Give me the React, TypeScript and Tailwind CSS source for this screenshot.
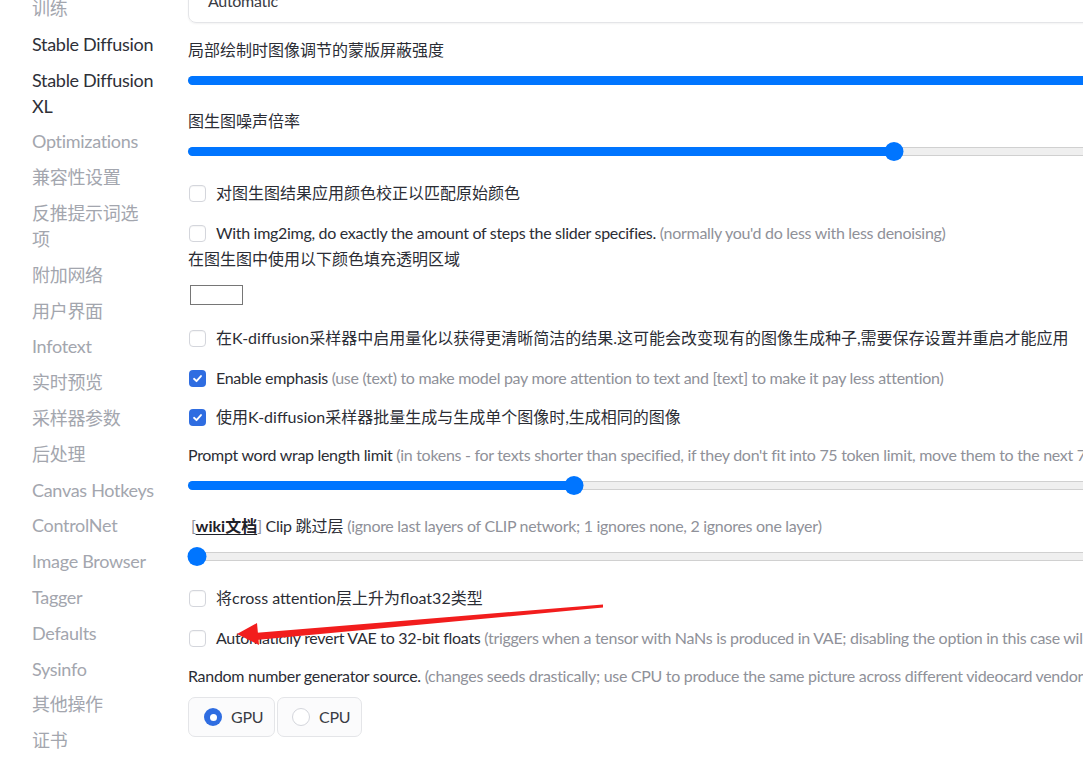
import React from "react";

const navItems: { label: React.ReactNode; dark?: boolean }[] = [
  { label: "训练" },
  { label: "Stable Diffusion", dark: true },
  { label: <>Stable Diffusion<br />XL</>, dark: true },
  { label: "Optimizations" },
  { label: "兼容性设置" },
  { label: <>反推提示词选<br />项</> },
  { label: "附加网络" },
  { label: "用户界面" },
  { label: "Infotext" },
  { label: "实时预览" },
  { label: "采样器参数" },
  { label: "后处理" },
  { label: "Canvas Hotkeys" },
  { label: "ControlNet" },
  { label: "Image Browser" },
  { label: "Tagger" },
  { label: "Defaults" },
  { label: "Sysinfo" },
  { label: "其他操作" },
  { label: "证书" },
];

const Slider = ({ fill, className = "" }: { fill: number; className?: string }) => {
  return (
    <div className={`relative h-[20px] w-[1000px] flex items-center ${className}`}>
      <div className="h-[9px] w-full rounded-full bg-[#efefef] border border-[#d0d0d0]" />
      <div
        className="absolute left-0 h-[9px] rounded-full bg-[#0075ff]"
        style={{ width: fill }}
      />
      {fill < 1000 && (
        <div
          className="absolute w-[19px] h-[19px] rounded-full bg-[#0075ff] -translate-x-1/2"
          style={{ left: fill }}
        />
      )}
    </div>
  );
};

const Check = ({ checked, children, className = "" }: { checked?: boolean; children: React.ReactNode; className?: string }) => {
  return (
    <div className={`flex items-center h-[24px] ${className}`}>
      {checked ? (
        <div className="w-[17px] h-[17px] ml-[1px] rounded-[4px] bg-[#2f6de1] flex items-center justify-center shrink-0">
          <svg width="11" height="11" viewBox="0 0 12 12" fill="none">
            <path d="M2.2 6.3 L4.9 8.9 L9.8 3.3" stroke="white" strokeWidth="2" strokeLinecap="round" strokeLinejoin="round" />
          </svg>
        </div>
      ) : (
        <div className="w-[17px] h-[17px] ml-[1px] rounded-[4px] border border-[#d4d6dc] bg-white shadow-[inset_0_1px_1px_rgba(0,0,0,0.04)] shrink-0" />
      )}
      <span className="ml-[10px]">{children}</span>
    </div>
  );
};

const Hint = ({ children }: { children: React.ReactNode }) => (
  <span className="text-[#8f9199]">{children}</span>
);

export default function App() {
  return (
    <div className="relative w-[1083px] h-[759px] overflow-hidden bg-white flex font-['Lato','Noto_Sans_CJK_SC',sans-serif] text-[#2b2d35]">
      <aside className="w-[188px] shrink-0 pl-[32px] -mt-[5px] flex flex-col gap-[9.8px] text-[18px] leading-[26px] whitespace-nowrap tracking-[-0.3px]">
        {navItems.map((item, i) => (
          <div key={i} className={item.dark ? "text-[#2e3038]" : "text-[#a3a6ae]"}>
            {item.label}
          </div>
        ))}
      </aside>

      <main className="flex flex-col text-[16px] leading-[24px] whitespace-nowrap tracking-[-0.3px]">
        <div className="-mt-[21px] h-[44px] w-[1000px] rounded-[8px] border border-[#e4e5e8] shadow-[0_1px_2px_rgba(0,0,0,0.05)] pl-[19px] flex items-center">
          <span className="text-[#3a3c44]">Automatic</span>
        </div>

        <div className="mt-[15px] tracking-normal">局部绘制时图像调节的蒙版屏蔽强度</div>
        <Slider fill={1000} className="mt-[8px]" />

        <div className="mt-[19px] tracking-normal">图生图噪声倍率</div>
        <Slider fill={706} className="mt-[8px]" />

        <Check className="mt-[20px] tracking-normal">对图生图结果应用颜色校正以匹配原始颜色</Check>
        <Check className="mt-[16px]">
          With img2img, do exactly the amount of steps the slider specifies. <Hint>(normally you'd do less with less denoising)</Hint>
        </Check>

        <div className="mt-[2px] tracking-normal">在图生图中使用以下颜色填充透明区域</div>
        <div className="mt-[14px] ml-[2px] w-[53px] h-[20px] border border-[#767676] bg-white" />

        <Check className="mt-[21px] tracking-normal">在K-diffusion采样器中启用量化以获得更清晰简洁的结果.这可能会改变现有的图像生成种子,需要保存设置并重启才能应用</Check>
        <Check checked className="mt-[16px]">
          Enable emphasis <Hint>(use (text) to make model pay more attention to text and [text] to make it pay less attention)</Hint>
        </Check>
        <Check checked className="mt-[15px] tracking-normal">使用K-diffusion采样器批量生成与生成单个图像时,生成相同的图像</Check>

        <div className="mt-[14px]">
          Prompt word wrap length limit <Hint>(in tokens - for texts shorter than specified, if they don't fit into 75 token limit, move them to the next 75 token chunk)</Hint>
        </div>
        <Slider fill={386} className="mt-[8px]" />

        <div className="mt-[19px] ml-[3px]">
          <Hint>[</Hint>
          <span className="font-bold underline underline-offset-2 text-[#1f2128] tracking-normal">wiki文档</span>
          <Hint>]</Hint> Clip <span className="tracking-normal">跳过层</span> <Hint>(ignore last layers of CLIP network; 1 ignores none, 2 ignores one layer)</Hint>
        </div>
        <Slider fill={9} className="mt-[8px]" />

        <Check className="mt-[20px] tracking-normal">将cross attention层上升为float32类型</Check>
        <Check className="mt-[16px]">
          Automaticlly revert VAE to 32-bit floats <Hint>(triggers when a tensor with NaNs is produced in VAE; disabling the option in this case will result in a black square image)</Hint>
        </Check>

        <div className="mt-[14px]">
          Random number generator source. <Hint>(changes seeds drastically; use CPU to produce the same picture across different videocard vendors; use NV to produce same picture as on NVidia videocards)</Hint>
        </div>

        <div className="mt-[9px] flex gap-[2px]">
          <div className="h-[40px] w-[87px] rounded-[7px] border border-[#e4e5e8] bg-[#fbfbfc] flex items-center pl-[15px] gap-[9px]">
            <div className="w-[18px] h-[18px] rounded-full bg-[#2f6de1] flex items-center justify-center">
              <div className="w-[7px] h-[7px] rounded-full bg-white" />
            </div>
            <span className="text-[#3a3c44]">GPU</span>
          </div>
          <div className="h-[40px] w-[85px] rounded-[7px] border border-[#e4e5e8] bg-[#fbfbfc] flex items-center pl-[14px] gap-[9px]">
            <div className="w-[18px] h-[18px] rounded-full border border-[#d4d6dc] bg-white" />
            <span className="text-[#3a3c44]">CPU</span>
          </div>
        </div>
      </main>

      <svg className="absolute left-0 top-0 pointer-events-none" width="1083" height="759">
        <polygon points="603,604.5 603,607.5 256,640 254,633" fill="#f21d1d" />
        <polygon points="237,634 257,623 259,645" fill="#f21d1d" />
      </svg>
    </div>
  );
}
